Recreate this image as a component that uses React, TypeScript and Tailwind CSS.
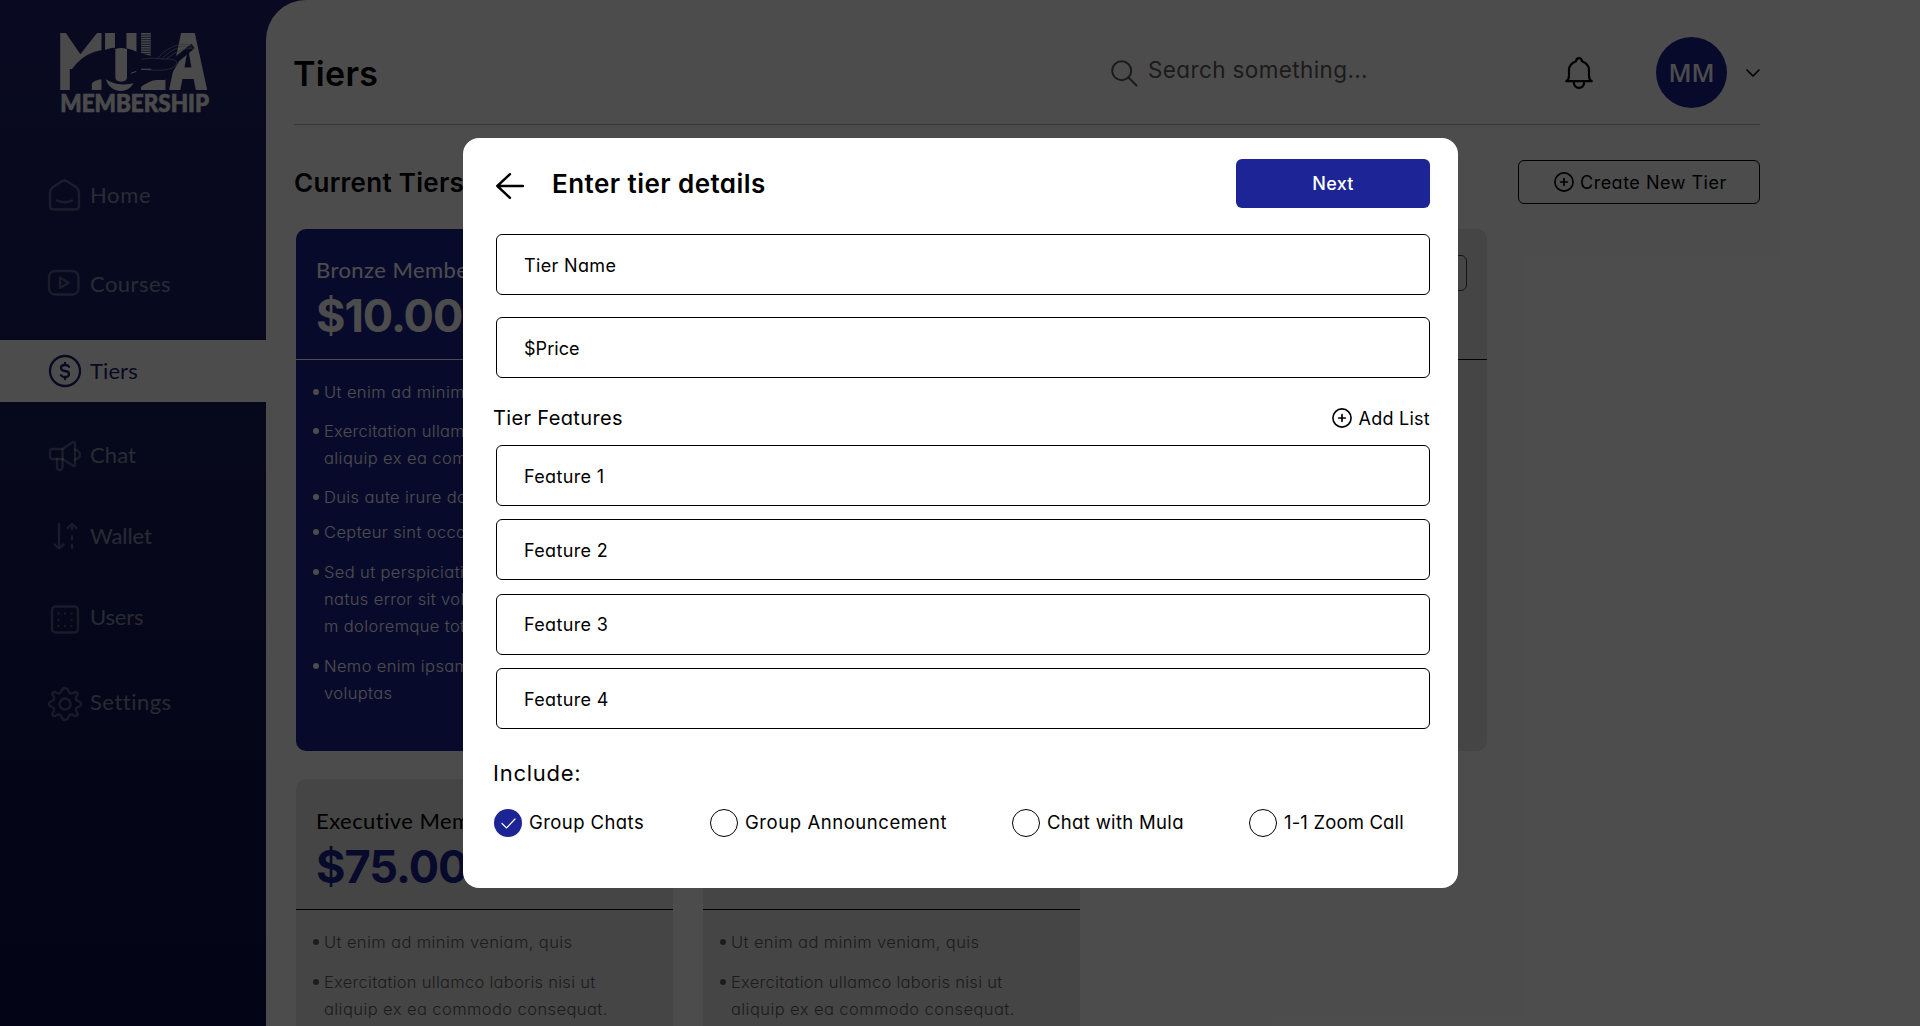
import type { ReactNode } from "react";

const BULLET_LINES = {
  veniam: { text: "Ut enim ad minim veniam, quis", spacing: "tracking-[0.4px]" },
  exercitation: { text: "Exercitation ullamco laboris nisi ut", spacing: "tracking-[0.28px]" },
  aliquip: { text: "aliquip ex ea commodo consequat.", spacing: "tracking-[0.42px]" },
};

type Line = { text: string; spacing: string };

function line(text: string): Line {
  return { text, spacing: "tracking-[0.38px]" };
}

function Logo() {
  return (
    <svg className="ml-[50px] mt-[25px] h-[95px] w-[170px] shrink-0" viewBox="0 0 510 285" fill="#f8f8f8">
      <g fontFamily="Inter, sans-serif" fontWeight={900} fontSize={234}>
        <text x="24" y="194" textLength="137" lengthAdjust="spacingAndGlyphs">M</text>
        <text x="158" y="194" textLength="108" lengthAdjust="spacingAndGlyphs">U</text>
        <text x="266" y="194" textLength="84" lengthAdjust="spacingAndGlyphs">L</text>
        <text x="354" y="194" textLength="121" lengthAdjust="spacingAndGlyphs">A</text>
      </g>
      <rect x="50" y="40" width="102" height="92" />
      <path fill="#1e236c" d="M45 20L91 88L144 20Z" />
      <path
        fill="#1e236c"
        d="M66 132L78 117Q112 82 154 76L164 75Q210 58 260 80L318 98V165Q296 168 270 188L262 172Q200 190 164 163Q130 163 122 180V200H66Z"
      />
      <path fill="#1e236c" d="M345 104L372 98L424 56L434 70L388 108L370 138L345 165H318V104Z" />
      <path d="M196 72Q212 66 231 72V156Q231 170 213 170Q196 170 196 156Z" />
      <path d="M167 163Q205 186 248 178Q232 197 208 197Q178 194 167 163Z" />
      <g stroke="#1e236c" strokeWidth="2.5">
        {[30, 37, 44, 51, 58, 65, 72, 79, 86, 93].map((y) => (
          <path key={y} d={`M268 ${y}H312`} />
        ))}
      </g>
      <g fill="none" stroke="#a9abc4" strokeWidth="2" strokeLinecap="round">
        <path d="M276 102Q310 96 340 102Q376 100 381 112Q380 128 350 134Q320 138 276 133" />
        <path d="M322 100Q352 66 390 58Q410 56 424 62" />
        <path d="M336 101Q362 74 396 64Q412 62 426 68" />
        <path d="M350 101Q372 82 402 72L430 70" />
      </g>
      <path d="M242 144L258 138L260 140L244 146Z" />
      <path d="M274 131L304 131L302 134H274Z" />
      <text
        x="31"
        y="261"
        fontFamily="Lato, sans-serif"
        fontWeight={900}
        fontSize={71}
        textLength="446"
        lengthAdjust="spacingAndGlyphs"
        stroke="#f8f8f8"
        strokeWidth="2"
      >
        MEMBERSHIP
      </text>
    </svg>
  );
}

function NavIcon({ children, active }: { children: ReactNode; active?: boolean }) {
  return (
    <svg
      className={active ? "size-10 text-[#1e2272]" : "size-10 text-white/30"}
      viewBox="0 0 40 40"
      fill="none"
      stroke="currentColor"
      strokeWidth="2.300"
      strokeLinecap="round"
      strokeLinejoin="round"
    >
      {children}
    </svg>
  );
}

const NAV: { label: string; margin: string; spacing: string; active?: boolean; icon: ReactNode }[] = [
  {
    label: "Home",
    margin: "mt-[44px]",
    spacing: "tracking-[0.66px]",
    icon: (
      <>
        <path d="M5 17.5Q5 14.5 7.5 12.5L17 6.2Q19.5 4.8 22 6.2L31.500 12.500Q34 14.500 34 17.500V31Q34 34.500 30.500 34.500H8.500Q5 34.500 5 31Z" />
        <path d="M12 25.500Q19.500 29 27 25.500" />
      </>
    ),
  },
  {
    label: "Courses",
    margin: "mt-[27px]",
    spacing: "tracking-[0.45px]",
    icon: (
      <>
        <rect x="4" y="7" width="29.500" height="23.500" rx="6" />
        <path d="M15 13.500V24L23.500 18.700Z" />
      </>
    ),
  },
  {
    label: "Tiers",
    margin: "mt-[25px]",
    spacing: "tracking-[0.1px]",
    active: true,
    icon: (
      <>
        <circle cx="20" cy="20" r="15" />
        <path d="M24 15.800Q23 14 20 14Q16 14 16 17Q16 19.600 20 20Q24 20.400 24 23Q24 26 20 26Q17 26 16 24.200M20 11.800V14M20 26V28.200" />
      </>
    ),
  },
  {
    label: "Chat",
    margin: "mt-[22px]",
    spacing: "tracking-[0.1px]",
    icon: (
      <>
        <path d="M17.500 14H7.500Q5 14 5 16.500V21.500Q5 24 7.500 24H17.500Z" />
        <path d="M17.500 14L27 7.500Q30 6 30 9V30Q30 32 27.500 30.500L17.500 24" />
        <path d="M12 24V32Q12 35 14.700 35Q17.500 35 17.500 32V24" />
        <path d="M30 14.500Q35 16 35 19.500Q35 23.500 30 24.500" />
      </>
    ),
  },
  {
    label: "Wallet",
    margin: "mt-[19px]",
    spacing: "tracking-[-0.08px]",
    icon: (
      <>
        <path d="M14 8V32M9.500 28.500L14 32.500L18.500 28.500" />
        <path d="M22.500 12L27 8L31.500 12M27 9V13M27 20.500V23.500M27 29V32" />
      </>
    ),
  },
  {
    label: "Users",
    margin: "mt-[19px]",
    spacing: "tracking-[-0.18px]",
    icon: (
      <>
        <rect x="7" y="9.500" width="26" height="26" rx="3.500" />
        <path d="M13.500 16.500h.01M20 16.500h.01M26.500 16.500h.01M13.500 23h.01M26.500 23h.01M13.500 29h.01M20 29h.01M26.500 29h.01" />
      </>
    ),
  },
  {
    label: "Settings",
    margin: "mt-[23px]",
    spacing: "tracking-[0.49px]",
    icon: (
      <>
        <circle cx="20" cy="22" r="5.500" />
        <path d="M20 6C24.500 6 22.500 11 26 11.500C28.500 12 29.500 8.500 32 10.500C34.500 13 29.500 14.500 31 17.500C32 20 36 18.500 36 22C36 25.500 32 24 31 26.500C29.500 29.500 34.500 31 32 33.500C29.500 35.500 28.500 32 26 32.500C22.500 33 24.500 38 20 38C15.500 38 17.500 33 14 32.500C11.500 32 10.500 35.500 8 33.500C5.500 31 10.500 29.500 9 26.500C8 24 4 25.500 4 22C4 18.500 8 20 9 17.500C10.500 14.500 5.500 13 8 10.500C10.500 8.500 11.500 12 14 11.500C17.500 11 15.500 6 20 6Z" />
      </>
    ),
  },
];

function Sidebar() {
  return (
    <aside className="flex h-full w-[266px] shrink-0 flex-col">
      <Logo />
      <nav className="flex flex-col">
        {NAV.map((item) => (
          <a
            key={item.label}
            className={`flex h-[62px] items-center gap-[5px] pl-[45px] ${item.margin} ${item.active ? "bg-white" : ""}`}
          >
            <NavIcon active={item.active}>{item.icon}</NavIcon>
            <span
              className={`font-['Lato',sans-serif] text-[22px] leading-none ${item.spacing} ${
                item.active ? "text-[#1e2272]" : "text-white/50"
              }`}
            >
              {item.label}
            </span>
          </a>
        ))}
      </nav>
    </aside>
  );
}

function PlusCircle({ className }: { className: string }) {
  return (
    <svg className={className} viewBox="0 0 20 20" fill="none" stroke="currentColor" strokeWidth="1.600" strokeLinecap="round">
      <circle cx="10" cy="10" r="9.100" />
      <path d="M10 6.700V13.300M6.700 10H13.300" strokeWidth="1.700" />
    </svg>
  );
}

function Header() {
  return (
    <header className="flex h-[125px] w-[1466px] shrink-0 items-center justify-between border-b border-[#b4b4b4] pt-[21px]">
      <h1 className="-ml-px pt-[2px] text-[34px] font-semibold leading-none tracking-[0.35px]">Tiers</h1>
      <div className="flex items-center">
        <div className="flex w-[454px] items-center gap-[10px] text-[#5c5c5c]">
          <svg className="mt-px size-[27px]" viewBox="0 0 27 27" fill="none" stroke="currentColor" strokeWidth="2" strokeLinecap="round">
            <circle cx="10.700" cy="10.700" r="9.500" />
            <path d="M17.500 17.500L25.500 25.500" />
          </svg>
          <span className="pb-[5px] text-[22.5px] leading-none tracking-[0.38px]">Search something...</span>
        </div>
        <svg className="h-[32px] w-[28px]" viewBox="0 0 28 32" fill="none" stroke="#000" strokeWidth="2.200" strokeLinecap="round" strokeLinejoin="round">
          <path d="M1.200 24.200H26.800Q24 22.500 24 19V13Q24 7 17 4.200Q16.500 1.200 14 1.200Q11.500 1.200 11 4.200Q4 7 4 13V19Q4 22.500 1.200 24.200Z" />
          <path d="M8.700 24.500Q9 30.800 14 30.800Q19 30.800 19.300 24.500" />
        </svg>
        <div className="ml-[63px] flex size-[71px] items-center justify-center rounded-full bg-[#1d2495] font-['Open_Sans',sans-serif] text-[25px] font-semibold leading-none text-white">
          MM
        </div>
        <svg className="ml-[19px] h-[10px] w-[14px]" viewBox="0 0 14 10" fill="none" stroke="#000" strokeWidth="1.600" strokeLinecap="round" strokeLinejoin="round">
          <path d="M1 2L7 8L13 2" />
        </svg>
      </div>
    </header>
  );
}

type Item = { gap: string; lines: Line[] };

const BRONZE_ITEMS: Item[] = [
  { gap: "", lines: [BULLET_LINES.veniam] },
  { gap: "mt-[12px]", lines: [BULLET_LINES.exercitation, BULLET_LINES.aliquip] },
  { gap: "mt-[12px]", lines: [line("Duis aute irure dolor")] },
  { gap: "mt-[8px]", lines: [line("Cepteur sint occaecat")] },
  { gap: "mt-[13px]", lines: [line("Sed ut perspiciatis unde"), line("natus error sit volup"), line("m doloremque totam")] },
  { gap: "mt-[13px]", lines: [line("Nemo enim ipsam"), line("voluptas")] },
];

const COMMON_ITEMS: Item[] = [
  { gap: "", lines: [BULLET_LINES.veniam] },
  { gap: "mt-[13px]", lines: [BULLET_LINES.exercitation, BULLET_LINES.aliquip] },
];

function TierCard({
  name,
  price,
  items = [],
  highlighted,
  editable,
}: {
  name?: string;
  price?: string;
  items?: Item[];
  highlighted?: boolean;
  editable?: boolean;
}) {
  return (
    <article
      className={`h-[522px] w-[377px] shrink-0 rounded-[10px] ${
        highlighted ? "bg-[#1d2495] text-white" : "bg-[#e6e6e6] text-[#606060]"
      }`}
    >
      <div
        className={`flex h-[131px] justify-between border-b px-5 pt-[26px] ${highlighted ? "border-white" : "border-black"}`}
      >
        <div className={`flex flex-col whitespace-nowrap ${highlighted ? "pt-px" : "pt-[2px]"}`}>
          {name && (
            <span
              className={`font-['Lato',sans-serif] text-[22px] leading-[28px] tracking-[0.45px] ${highlighted ? "text-white" : "text-black"}`}
            >
              {name}
            </span>
          )}
          {price && (
            <span
              className={`mt-[7px] text-[45px] font-bold leading-[50px] tracking-[-1px] ${highlighted ? "text-white" : "text-[#1d2495]"}`}
            >
              {price}
            </span>
          )}
        </div>
        {editable && <div className="h-[36px] w-[110px] rounded-md border border-[#444]" />}
      </div>
      <ul className="pl-[17px] pt-[19px]">
        {items.map((item, i) => (
          <li key={i} className={`flex gap-[5px] ${item.gap}`}>
            <span className="mt-[10px] size-[6px] shrink-0 rounded-full bg-current" />
            <div className="flex flex-col whitespace-nowrap">
              {item.lines.map((l) => (
                <span key={l.text} className={`text-[16.5px] font-light leading-[27px] ${l.spacing}`}>
                  {l.text}
                </span>
              ))}
            </div>
          </li>
        ))}
      </ul>
    </article>
  );
}

function Field({ label, className = "", spacing = "tracking-[0.35px]" }: { label: string; className?: string; spacing?: string }) {
  return (
    <div className={`flex h-[61px] items-center rounded-md border border-black pl-[27px] pt-px text-[18px] ${spacing} ${className}`}>
      {label}
    </div>
  );
}

const OPTIONS = [
  { label: "Group Chats", checked: true, width: "w-[216px]", spacing: "tracking-[0.42px]" },
  { label: "Group Announcement", checked: false, width: "w-[302px]", spacing: "tracking-[0.56px]" },
  { label: "Chat with Mula", checked: false, width: "w-[237px]", spacing: "tracking-[0.32px]" },
  { label: "1-1 Zoom Call", checked: false, width: "w-[160px]", spacing: "tracking-[0.16px]" },
];

function TierModal() {
  return (
    <section className="ml-[463px] mt-[138px] flex h-[750px] w-[995px] flex-col rounded-2xl bg-white pl-[33px] pr-[28px] pt-[21px] text-black">
      <div className="flex h-[49px] items-center">
        <svg className="mt-[5px] h-[26px] w-[28px]" viewBox="0 0 28 26" fill="none" stroke="#000" strokeWidth="2.400" strokeLinecap="round" strokeLinejoin="round">
          <path d="M14 1.200L1.300 13L14 24.800M1.300 13H27" />
        </svg>
        <h2 className="ml-[28px] pt-px text-[26px] font-semibold leading-none tracking-[0.45px]">Enter tier details</h2>
        <button className="ml-auto h-[49px] w-[194px] rounded-md bg-[#1d2495] text-[18px] font-medium tracking-[0.28px] text-white">
          Next
        </button>
      </div>
      <Field label="Tier Name" className="mt-[26px]" />
      <Field label="$Price" className="mt-[22px]" spacing="tracking-[0.05px]" />
      <div className="mt-[26px] flex h-[28px] items-center justify-between">
        <span className="-ml-[3px] text-[20px] tracking-[0.36px]">Tier Features</span>
        <span className="flex items-center gap-[7px] text-[18px] tracking-[0.25px]">
          <PlusCircle className="size-[20px]" />
          Add List
        </span>
      </div>
      <div className="mt-[13px] flex flex-col gap-[13.4px]">
        {["Feature 1", "Feature 2", "Feature 3", "Feature 4"].map((f) => (
          <Field key={f} label={f} />
        ))}
      </div>
      <span className="-ml-[3px] mt-[29px] text-[22px] leading-[30px] tracking-[0.75px]">Include:</span>
      <div className="-ml-[2px] mt-[21px] flex">
        {OPTIONS.map((o) => (
          <label key={o.label} className={`flex items-center gap-[7px] whitespace-nowrap ${o.width}`}>
            {o.checked ? (
              <span className="flex size-[28px] shrink-0 items-center justify-center rounded-full bg-[#1d2495]">
                <svg className="h-[11px] w-[15px]" viewBox="0 0 15 11" fill="none" stroke="#fff" strokeWidth="1.200" strokeLinecap="round">
                  <path d="M1 5.500L5.500 10L14 1" />
                </svg>
              </span>
            ) : (
              <span className="size-[28px] shrink-0 rounded-full border border-black" />
            )}
            <span className={`pb-[2px] text-[18.5px] leading-[26px] ${o.spacing}`}>{o.label}</span>
          </label>
        ))}
      </div>
    </section>
  );
}

export default function App() {
  return (
    <div className="relative h-[1026px] w-[1920px] overflow-hidden bg-linear-to-b from-[#1f2470] to-[#0c1048] font-['Inter',sans-serif] text-black [font-feature-settings:'cv11']">
      <div className="flex h-full">
        <Sidebar />
        <main className="flex h-full grow flex-col rounded-tl-[40px] bg-white pl-[28px]">
          <Header />
          <div className="mt-[35px] flex h-[44px] w-[1466px] shrink-0 items-center justify-between">
            <h2 className="pt-[2px] text-[26px] font-semibold leading-none tracking-[0.29px]">Current Tiers</h2>
            <button className="flex h-[44px] w-[242px] items-center gap-[6px] rounded-md border-[1.5px] border-black pl-[35px] text-[18px] tracking-[0.5px]">
              <PlusCircle className="size-[20px]" />
              Create New Tier
            </button>
          </div>
          <div className="ml-[2px] mt-[25px] flex shrink-0 flex-col gap-[28px]">
            <div className="flex gap-[30px]">
              <TierCard name="Bronze Membership" price="$10.00" items={BRONZE_ITEMS} highlighted />
              <TierCard />
              <TierCard editable />
            </div>
            <div className="flex gap-[30px]">
              <TierCard name="Executive Membership" price="$75.00" items={COMMON_ITEMS} />
              <TierCard items={COMMON_ITEMS} />
            </div>
          </div>
        </main>
      </div>
      <div className="absolute inset-0 bg-black/70">
        <TierModal />
      </div>
    </div>
  );
}
